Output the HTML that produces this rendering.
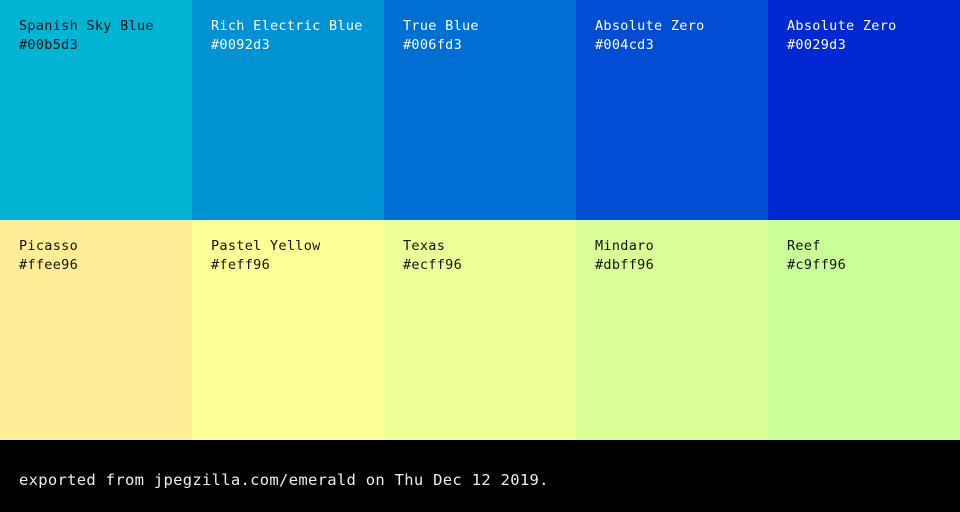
<!DOCTYPE html>
<html><head><style>
*{margin:0;padding:0}
html,body{width:960px;height:512px;overflow:hidden;background:#000;font-family:"DejaVu Sans Mono","Liberation Mono",monospace;}
.row{display:flex;height:220px}
.c{width:192px;height:220px;box-sizing:border-box;padding:17px 0 0 19px;font-size:13.5px;line-height:19px;letter-spacing:0.3px}
.w{color:#fff}.k{color:#111}
.f{height:72px;overflow:hidden;color:#eee;font-size:15.5px;padding:0 0 0 19px;line-height:80px;letter-spacing:0.3px}
</style></head><body>
<div class="row">
<div class="c k" style="background:#00b5d3">Spanish Sky Blue<br>#00b5d3</div>
<div class="c w" style="background:#0092d3">Rich Electric Blue<br>#0092d3</div>
<div class="c w" style="background:#006fd3">True Blue<br>#006fd3</div>
<div class="c w" style="background:#004cd3">Absolute Zero<br>#004cd3</div>
<div class="c w" style="background:#0029d3">Absolute Zero<br>#0029d3</div>
</div>
<div class="row">
<div class="c k" style="background:#ffee96">Picasso<br>#ffee96</div>
<div class="c k" style="background:#feff96">Pastel Yellow<br>#feff96</div>
<div class="c k" style="background:#ecff96">Texas<br>#ecff96</div>
<div class="c k" style="background:#dbff96">Mindaro<br>#dbff96</div>
<div class="c k" style="background:#c9ff96">Reef<br>#c9ff96</div>
</div>
<div class="f">exported from jpegzilla.com/emerald on Thu Dec 12 2019.</div>
</body></html>
